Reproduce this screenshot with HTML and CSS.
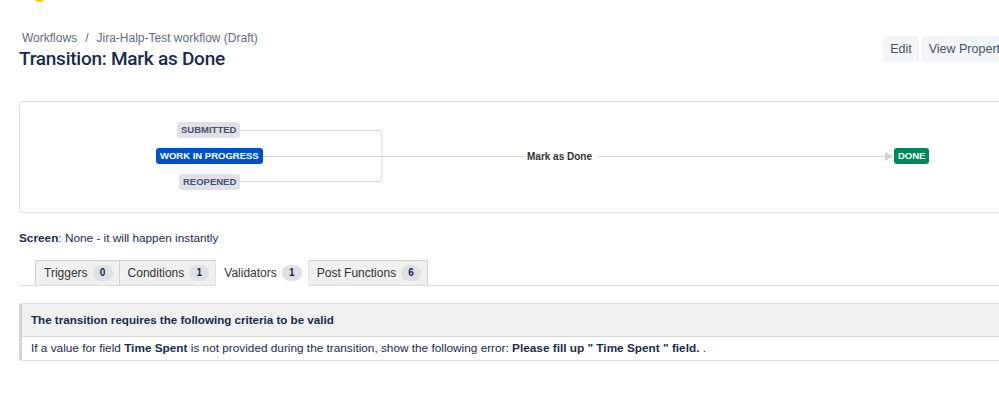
FILE: index.html
```html
<!DOCTYPE html>
<html>
<head>
<meta charset="utf-8">
<link rel="stylesheet" href="styles.css">
</head>
<body>
<span class="sun"></span>
<div class="page">
  <header class="head">
    <div class="titles">
      <nav class="crumbs"><a>Workflows</a><span class="sep">/</span><a>Jira-Halp-Test workflow (Draft)</a></nav>
      <h1>Transition: Mark as Done</h1>
    </div>
    <div class="actions">
      <button class="btn">Edit</button>
      <button class="btn">View Properties</button>
    </div>
  </header>

  <section class="diagram">
    <svg class="wires" width="1000" height="110" viewBox="0 0 1000 110">
      <g fill="none" stroke="#d4d4d4" stroke-width="1">
        <path d="M221 28.5 H359 a3 3 0 0 1 3 3 V76.5 a3 3 0 0 1 -3 3 H219"/>
        <path d="M242 54.5 H505"/>
        <path d="M577 54.5 H866"/>
      </g>
      <polygon points="865,50 873,54.5 865,59" fill="#cfcfcf"/>
    </svg>
    <span class="loz grey n-sub">SUBMITTED</span>
    <span class="loz blue n-wip">WORK IN PROGRESS</span>
    <span class="loz grey n-reo">REOPENED</span>
    <span class="edge-label">Mark as Done</span>
    <span class="loz green n-done">DONE</span>
  </section>

  <p class="screen"><b>Screen</b>: None - it will happen instantly</p>

  <div class="tabs">
    <div class="tab">Triggers <span class="count">0</span></div>
    <div class="tab">Conditions <span class="count">1</span></div>
    <div class="tab active">Validators <span class="count">1</span></div>
    <div class="tab">Post Functions <span class="count">6</span></div>
  </div>

  <div class="panel">
    <div class="panel-head">The transition requires the following criteria to be valid</div>
    <div class="panel-row">If a value for field <b>Time Spent</b> is not provided during the transition, show the following error: <b>Please fill up " Time Spent " field. </b>.</div>
  </div>
</div>
</body>
</html>
```

FILE: styles.css
```css
html, body {
  margin: 0;
  padding: 0;
  background: #fff;
  overflow: hidden;
}
body {
  font-family: "Liberation Sans", Arial, sans-serif;
  color: #172b4d;
  position: relative;
  width: 999px;
  height: 393px;
}
.sun {
  position: absolute;
  left: 34px;
  top: -9px;
  width: 11px;
  height: 11px;
  border-radius: 50%;
  background: #ffc400;
}
.page {
  width: 1060px;
  padding: 30px 0 0 19px;
}
.head {
  display: flex;
  align-items: flex-start;
  justify-content: space-between;
  width: 1004px;
}
.crumbs {
  font-size: 12px;
  color: #5e6c84;
  padding-left: 3px;
  line-height: 16px;
}
.crumbs .sep {
  margin: 0 8px;
}
h1 {
  margin: 1px 0 0;
  font-family: Roboto, "Liberation Sans", sans-serif;
  font-size: 19px;
  font-weight: 500;
  letter-spacing: -0.25px;
  line-height: 24px;
  color: #172b4d;
}
.actions {
  display: flex;
  gap: 3px;
  margin-top: 6px;
}
.btn {
  font-family: inherit;
  font-size: 12.5px;
  color: #42526e;
  background: #f4f5f7;
  border: 0;
  border-radius: 3px;
  height: 26px;
  padding: 0 7px;
}
.diagram {
  position: relative;
  margin-top: 30px;
  width: 1040px;
  height: 110px;
  border: 1px solid #dcdcdc;
  border-radius: 4px;
}
.wires {
  position: absolute;
  left: 0;
  top: 0;
}
.loz {
  position: absolute;
  height: 16px;
  line-height: 16px;
  padding: 0 4px;
  border-radius: 3px;
  font-size: 9.5px;
  font-weight: 700;
  text-transform: uppercase;
  white-space: nowrap;
}
.grey { background: #dfe1e6; color: #42526e; }
.blue { background: #0052cc; color: #fff; }
.green { background: #00875a; color: #fff; }
.n-sub { left: 157px; top: 20px; }
.n-wip { left: 136px; top: 46px; }
.n-reo { left: 159px; top: 72px; }
.n-done { left: 874px; top: 46px; }
.edge-label {
  position: absolute;
  left: 507px;
  top: 47px;
  font-size: 10px;
  font-weight: 700;
  color: #333;
  line-height: 16px;
}
.screen {
  margin: 17px 0 0;
  font-size: 11.8px;
  line-height: 16px;
  color: #172b4d;
}
.tabs {
  display: flex;
  margin-top: 14px;
  padding-left: 16px;
  border-bottom: 1px solid #dcdcdc;
  width: 1024px;
  height: 25px;
}
.tab {
  box-sizing: border-box;
  height: 25px;
  padding: 0 6px 0 8px;
  display: flex;
  align-items: center;
  gap: 5px;
  font-size: 12px;
  color: #333;
  background: #f0f0f0;
  border: 1px solid #d0d0d0;
  border-bottom: 0;
  margin-right: -1px;
}
.tab.active {
  background: #fff;
  height: 26px;
  border-color: #e4e4e4;
  border-top: 0;
  position: relative;
}
.count {
  display: inline-block;
  min-width: 20px;
  height: 16px;
  line-height: 16px;
  border-radius: 8px;
  background: #dfe1e6;
  color: #172b4d;
  font-size: 10px;
  font-weight: 700;
  text-align: center;
}
.panel {
  margin-top: 17px;
  width: 1040px;
  border: 1px solid #dcdcdc;
  border-left: 3px solid #d4d4d4;
  border-radius: 3px;
}
.panel-head {
  background: #f0f0f0;
  height: 32px;
  line-height: 32px;
  padding-left: 9px;
  font-size: 11.6px;
  font-weight: 700;
  border-bottom: 1px solid #d6d6d6;
}
.panel-row {
  height: 23px;
  line-height: 23px;
  padding-left: 9px;
  font-size: 11.8px;
  color: #172b4d;
}
```
